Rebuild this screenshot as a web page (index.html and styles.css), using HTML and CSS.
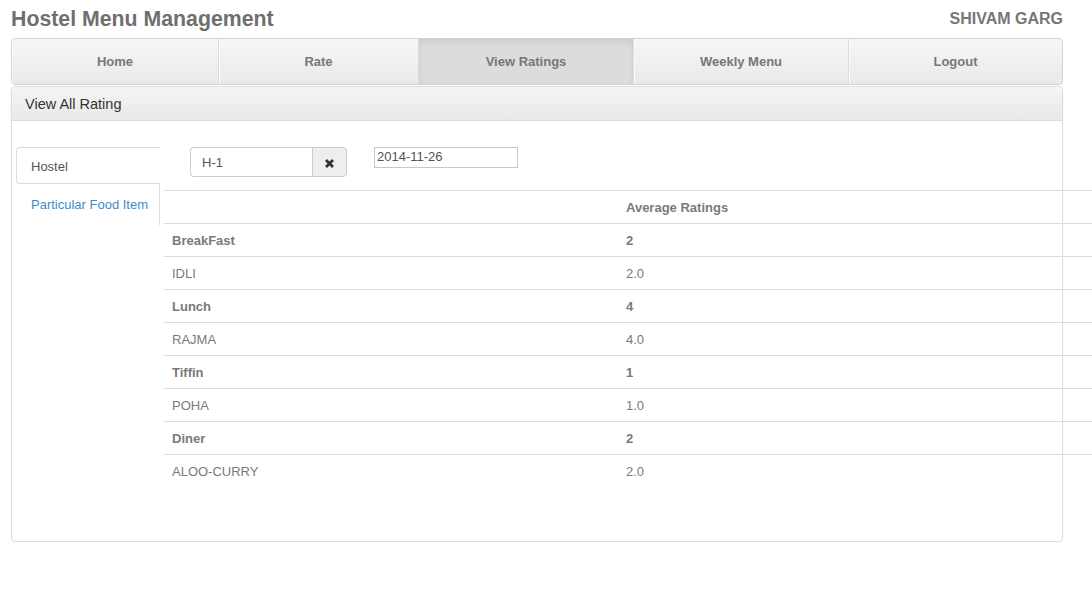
FILE: index.html
```html
<!DOCTYPE html>
<html>
<head>
<meta charset="utf-8">
<title>Hostel Menu Management</title>
<link rel="stylesheet" href="styles.css">
</head>
<body>
<div class="page">
  <header class="top">
    <h1 class="brand">Hostel Menu Management</h1>
    <div class="user">SHIVAM GARG</div>
  </header>
  <nav class="mainnav">
    <a class="navitem">Home</a>
    <a class="navitem">Rate</a>
    <a class="navitem active">View Ratings</a>
    <a class="navitem">Weekly Menu</a>
    <a class="navitem last">Logout</a>
  </nav>
  <section class="panel">
    <div class="panel-heading">View All Rating</div>
    <div class="panel-body">
      <ul class="tabs">
        <li class="tab active">Hostel</li>
        <li class="tab link">Particular Food Item</li>
      </ul>
      <div class="content">
        <div class="filters">
          <div class="input-group">
            <div class="field">H-1</div>
            <div class="addon">
              <svg width="11" height="11" viewBox="0 0 11 11"><path d="M2 2 L9 9 M9 2 L2 9" stroke="#333" stroke-width="2.8" stroke-linecap="butt"/></svg>
            </div>
          </div>
          <div class="date">2014-11-26</div>
        </div>
        <table class="ratings">
          <thead>
            <tr><th class="c1"></th><th class="c2">Average Ratings</th></tr>
          </thead>
          <tbody>
            <tr class="meal"><td>BreakFast</td><td>2</td></tr>
            <tr><td>IDLI</td><td>2.0</td></tr>
            <tr class="meal"><td>Lunch</td><td>4</td></tr>
            <tr><td>RAJMA</td><td>4.0</td></tr>
            <tr class="meal"><td>Tiffin</td><td>1</td></tr>
            <tr><td>POHA</td><td>1.0</td></tr>
            <tr class="meal"><td>Diner</td><td>2</td></tr>
            <tr><td>ALOO-CURRY</td><td>2.0</td></tr>
          </tbody>
        </table>
      </div>
    </div>
  </section>
</div>
</body>
</html>
```

FILE: styles.css
```css
html, body {
  margin: 0;
  padding: 0;
  overflow: hidden;
  background: #fff;
}
body {
  font-family: "Liberation Sans", Arial, Helvetica, sans-serif;
  font-size: 13px;
  color: #555;
}
.page {
  padding: 0 29px 0 11px;
}
.top {
  height: 38px;
  display: flex;
  align-items: center;
  justify-content: space-between;
}
.brand {
  margin: 0;
  font-size: 21.3px;
  font-weight: bold;
  color: #6f6f6f;
  line-height: 24px;
  padding-bottom: 1px;
}
.user {
  font-size: 16px;
  font-weight: bold;
  color: #777;
  line-height: 20px;
}
.mainnav {
  display: grid;
  grid-template-columns: 207px 200px 215px 215px 1fr;
  height: 45px;
  border: 1px solid #d2d2d2;
  border-radius: 4px;
  background: linear-gradient(#f7f7f7, #e9e9e9);
  overflow: hidden;
}
.navitem {
  display: flex;
  align-items: center;
  justify-content: center;
  font-weight: bold;
  font-size: 13px;
  color: #777;
  border-right: 1px solid #dcdcdc;
  box-shadow: inset 1px 0 0 #fbfbfb;
}
.navitem.last {
  border-right: none;
}
.navitem.active {
  background: #dcdcdc;
  box-shadow: inset 0 3px 6px rgba(0, 0, 0, 0.08);
}
.panel {
  margin-top: 1px;
  border: 1px solid #dcdcdc;
  border-radius: 4px;
  box-shadow: 0 1px 2px rgba(0, 0, 0, 0.06);
  height: 456px;
  box-sizing: border-box;
}
.panel-heading {
  height: 34px;
  box-sizing: border-box;
  padding: 0 13px;
  display: flex;
  align-items: center;
  font-size: 14.5px;
  color: #333;
  background: linear-gradient(#f5f5f5, #e9e9e9);
  border-bottom: 1px solid #dcdcdc;
  border-radius: 3px 3px 0 0;
}
.panel-body {
  display: flex;
  align-items: flex-start;
  padding-top: 26px;
  padding-left: 4px;
}
.tabs {
  list-style: none;
  margin: 0;
  padding: 0;
  width: 143px;
  flex-shrink: 0;
  border-right: 1px solid #dcdcdc;
}
.tab {
  padding: 0 14px;
  height: 40px;
  display: flex;
  align-items: center;
  font-size: 13px;
  white-space: nowrap;
}
.tab.active {
  height: 37px;
  box-sizing: border-box;
  border: 1px solid #dcdcdc;
  border-right: none;
  border-radius: 4px 0 0 4px;
  background: #fff;
  margin-right: -1px;
  color: #555;
  padding-top: 1px;
}
.tab.link {
  color: #428bca;
  padding-left: 15px;
  padding-right: 0;
  height: 41px;
}
.content {
  width: 928px;
  flex-shrink: 0;
  margin-left: 4px;
}
.filters {
  display: flex;
  align-items: flex-start;
  gap: 27px;
  padding-left: 26px;
  height: 43px;
}
.input-group {
  display: flex;
  height: 30px;
}
.field {
  width: 122px;
  box-sizing: border-box;
  border: 1px solid #ccc;
  border-right: none;
  border-radius: 4px 0 0 4px;
  padding: 0 11px;
  display: flex;
  align-items: center;
  font-size: 13px;
  color: #555;
}
.addon {
  width: 35px;
  box-sizing: border-box;
  border: 1px solid #ccc;
  border-radius: 0 4px 4px 0;
  background: #eee;
  display: flex;
  align-items: center;
  justify-content: center;
  padding-top: 2px;
}
.date {
  width: 144px;
  height: 21px;
  box-sizing: border-box;
  border: 1px solid #c8c8c8;
  padding: 1px 2px 0;
  font-size: 13px;
  line-height: 16px;
  color: #555;
}
.ratings {
  width: 928px;
  border-collapse: collapse;
  font-size: 13px;
  color: #7a7a7a;
}
.ratings th,
.ratings td {
  height: 32px;
  padding: 0 8px;
  text-align: left;
  vertical-align: middle;
  border-top: 1px solid #dcdcdc;
}
.ratings th {
  font-weight: bold;
}
.ratings .c1 {
  width: 438px;
}
.ratings .meal td {
  font-weight: bold;
}
```
